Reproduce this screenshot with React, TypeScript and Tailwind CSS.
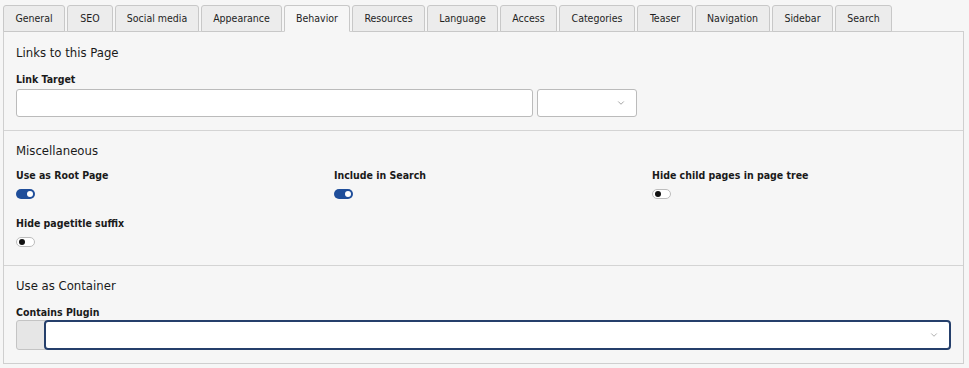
import { ChevronDown } from "lucide-react";

const tabs = [
  { label: "General", w: "w-[62px]" },
  { label: "SEO", w: "w-[46px]" },
  { label: "Social media", w: "w-[84px]" },
  { label: "Appearance", w: "w-[81px]" },
  { label: "Behavior", w: "w-[66px]", active: true },
  { label: "Resources", w: "w-[73px]" },
  { label: "Language", w: "w-[71px]" },
  { label: "Access", w: "w-[57px]" },
  { label: "Categories", w: "w-[76px]" },
  { label: "Teaser", w: "w-[56px]" },
  { label: "Navigation", w: "w-[75px]" },
  { label: "Sidebar", w: "w-[61px]" },
  { label: "Search", w: "w-[57px]" },
];

const Toggle = ({ on }: { on?: boolean }) =>
  on ? (
    <div className="mt-[7px] flex h-[10px] w-[19px] items-center justify-end rounded-full bg-[#1f4e9a] pr-[2px]">
      <div className="h-[6px] w-[6px] rounded-full bg-white" />
    </div>
  ) : (
    <div className="mt-[7px] flex h-[10px] w-[19px] items-center rounded-full border border-[#bdbdbd] bg-white pl-[2px]">
      <div className="h-[6px] w-[6px] rounded-full bg-[#111]" />
    </div>
  );

const Check = ({ label, on }: { label: string; on?: boolean }) => (
  <div className="flex flex-col">
    <span className="text-[10.5px] font-bold leading-[14px] text-[#1a1a1a]">{label}</span>
    <Toggle on={on} />
  </div>
);

const App = () => {
  return (
    <div
      className="h-[368px] w-[969px] bg-[#f6f6f6] pl-[3px] pt-[5px]"
      style={{ fontFamily: '"DejaVu Sans Condensed", "DejaVu Sans", sans-serif' }}
    >
      {/* Tabs */}
      <div className="relative z-10 flex h-[27px]">
        {tabs.map((t) => (
          <div
            key={t.label}
            className={`mr-[2px] flex h-[27px] items-center justify-center rounded-t-[3px] border border-[#c8c8c8] text-[10.5px] text-[#1f1f1f] ${t.w} ${
              t.active ? "border-b-[#f6f6f6] bg-[#f6f6f6]" : "bg-[#ececec]"
            }`}
          >
            {t.label}
          </div>
        ))}
      </div>

      {/* Panel */}
      <div className="-mt-px w-[961px] border border-[#cfcfcf] bg-[#f6f6f6]">
        <section className="border-b border-[#d4d4d4] px-[12px] pb-[13px] pt-[13px]">
          <h2 className="text-[13px] leading-[16px] text-[#1a1a1a]">Links to this Page</h2>
          <div className="mt-[11px] text-[10.5px] font-bold leading-[14px] text-[#1a1a1a]">Link Target</div>
          <div className="mt-[3px] flex gap-[4px]">
            <div className="h-[28px] w-[517px] rounded-[3px] border border-[#bbbbbb] bg-white" />
            <div className="flex h-[28px] w-[100px] items-center justify-end rounded-[3px] border border-[#bbbbbb] bg-white pr-[10px]">
              <ChevronDown className="h-[10px] w-[10px] text-[#777]" strokeWidth={1.6} />
            </div>
          </div>
        </section>

        <section className="border-b border-[#d4d4d4] px-[12px] pb-[18px] pt-[12px]">
          <h2 className="text-[13px] leading-[16px] text-[#1a1a1a]">Miscellaneous</h2>
          <div className="mt-[9px] grid grid-cols-[318px_318px_1fr] gap-y-[17px]">
            <Check label="Use as Root Page" on />
            <Check label="Include in Search" on />
            <Check label="Hide child pages in page tree" />
            <Check label="Hide pagetitle suffix" />
          </div>
        </section>

        <section className="px-[12px] pb-[13px] pt-[12px]">
          <h2 className="text-[13px] leading-[16px] text-[#1a1a1a]">Use as Container</h2>
          <div className="mt-[11px] text-[10.5px] font-bold leading-[14px] text-[#1a1a1a]">Contains Plugin</div>
          <div className="mt-[1px] flex">
            <div className="h-[30px] w-[30px] rounded-l-[3px] border border-[#c4c4c4] bg-[#e6e6e6]" />
            <div className="-ml-[2px] flex h-[30px] w-[910px] items-center justify-end rounded-[4px] border-2 border-[#253f6b] bg-white pr-[10px]">
              <ChevronDown className="h-[10px] w-[10px] text-[#888]" strokeWidth={1.6} />
            </div>
          </div>
        </section>
      </div>
    </div>
  );
};

export default App;
